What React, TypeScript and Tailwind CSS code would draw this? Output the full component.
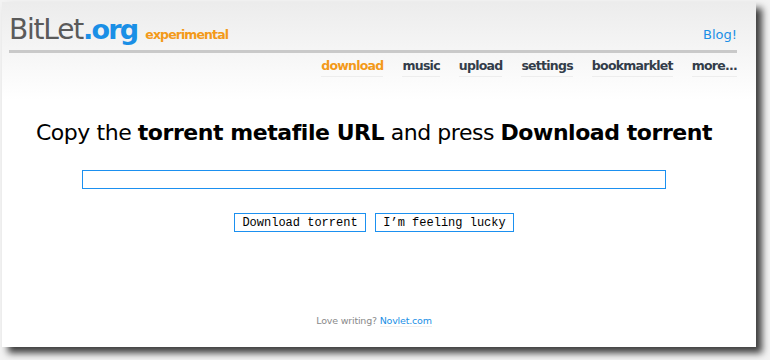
export default function App() {
  const nav = ["download", "music", "upload", "settings", "bookmarklet", "more..."]

  return (
    <div className="w-[770px] h-[360px] bg-[#f3f3f3] pt-[2px] pl-[2px] font-['DejaVu_Sans',sans-serif]">
      <div className="w-[754px] h-[345px] bg-white shadow-[6px_6px_7px_rgba(0,0,0,0.75)] flex flex-col">
        <div className="bg-gradient-to-b from-[#ececec] to-white h-[98px] pl-[7px] pr-[19px] pt-[11px]">
          <div className="flex items-end justify-between border-b-[3px] border-[#c9c9c9] pb-[4px]">
            <div className="flex items-baseline">
              <span className="text-[28px] leading-[33px] text-[#5a5a5a] tracking-[-1.2px]">BitLet</span>
              <span className="text-[27px] leading-[33px] font-bold text-[#1a8fe6] tracking-[-1.8px]">.org</span>
              <span className="text-[12.5px] font-bold text-[#f39a1a] ml-[8px] tracking-[-0.9px]">experimental</span>
            </div>
            <a className="text-[13px] text-[#1a8fe6] mb-[2px]">Blog!</a>
          </div>
          <div className="flex justify-end gap-[19px] mt-[4px]">
            {nav.map((n) => (
              <a
                key={n}
                className={`text-[12.5px] font-bold leading-[18px] pb-[1px] border-b border-[#ededed] tracking-[-0.75px] ${
                  n === "download" ? "text-[#f39a1a]" : "text-[#333d4a]"
                }`}
              >
                {n}
              </a>
            ))}
          </div>
        </div>

        <div className="flex flex-col items-center w-[744px]">
          <h1 className="text-[22px] text-black mt-[16px] tracking-[-0.45px]">
            Copy the <b>torrent metafile URL</b> and press <b>Download torrent</b>
          </h1>
          <input
            className="mt-[21px] w-[584px] h-[19px] border border-[#1b90f0] outline-none"
            type="text"
          />
          <div className="flex gap-[9px] mt-[24px] font-['Liberation_Mono',monospace] text-[12px]">
            <button className="h-[19px] w-[132px] border border-[#1b90f0] bg-white text-black leading-[16px]">
              Download torrent
            </button>
            <button className="h-[19px] w-[139px] border border-[#1b90f0] bg-white text-black leading-[16px]">
              I’m feeling lucky
            </button>
          </div>
          <div className="mt-[82px] text-[9.5px] tracking-[-0.2px]">
            <span className="text-[#8a8a8a]">Love writing? </span>
            <a className="text-[#1a8fe6] border-b border-[#f0f0f0]">Novlet.com</a>
          </div>
        </div>
      </div>
    </div>
  )
}
